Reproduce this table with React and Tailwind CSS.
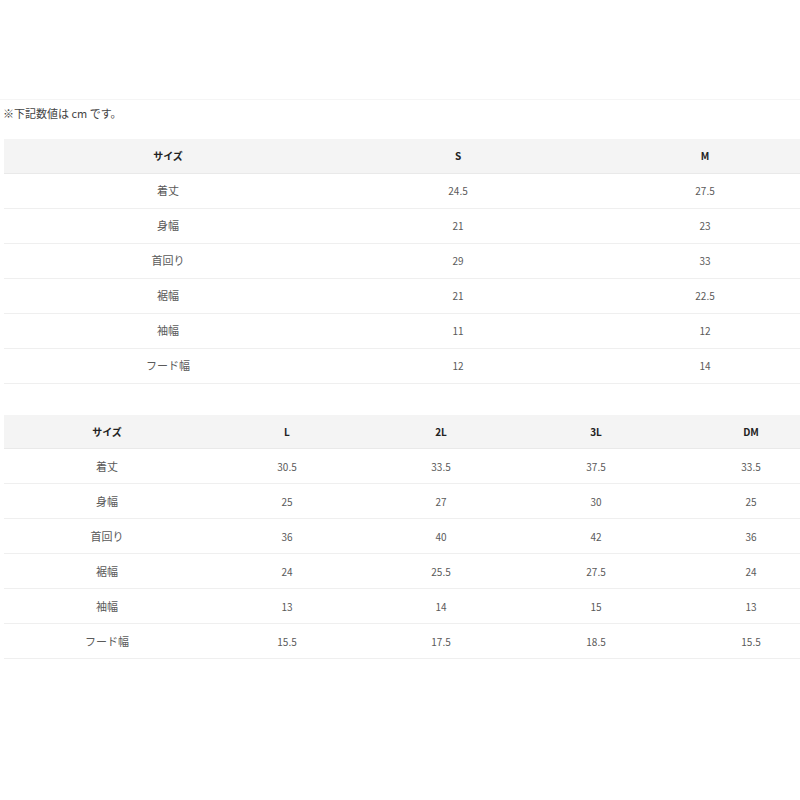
import React from "react";

const table1 = {
    widths: [328, 252, 242],
    head: ["サイズ", "S", "M"],
    rows: [
        ["着丈", "24.5", "27.5"],
        ["身幅", "21", "23"],
        ["首回り", "29", "33"],
        ["裾幅", "21", "22.5"],
        ["袖幅", "11", "12"],
        ["フード幅", "12", "14"],
    ],
};

const table2 = {
    widths: [206, 154, 154, 156, 154],
    head: ["サイズ", "L", "2L", "3L", "DM"],
    rows: [
        ["着丈", "30.5", "33.5", "37.5", "33.5"],
        ["身幅", "25", "27", "30", "25"],
        ["首回り", "36", "40", "42", "36"],
        ["裾幅", "24", "25.5", "27.5", "24"],
        ["袖幅", "13", "14", "15", "13"],
        ["フード幅", "15.5", "17.5", "18.5", "15.5"],
    ],
};

const SizeTable = ({ data }) => {
    const total = data.widths.reduce((a, b) => a + b, 0);
    return (
        <table className="table-fixed border-collapse" style={{ width: total }}>
            <colgroup>
                {data.widths.map((w, i) => (
                    <col key={i} style={{ width: w }} />
                ))}
            </colgroup>
            <thead>
                <tr className="h-[34px] bg-[#f4f4f4] border-b border-[#e9e9e9]">
                    {data.head.map((h, i) => (
                        <th key={i} className="text-center font-bold text-[10px] text-[#222] p-0">
                            {h}
                        </th>
                    ))}
                </tr>
            </thead>
            <tbody>
                {data.rows.map((row, r) => (
                    <tr key={r} className="h-[35px] border-b border-[#efefef]">
                        {row.map((cell, c) => (
                            <td
                                key={c}
                                className={`text-center p-0 text-[#5a5a5a] ${c === 0 ? "text-[11px]" : "text-[10px]"}`}
                            >
                                {cell}
                            </td>
                        ))}
                    </tr>
                ))}
            </tbody>
        </table>
    );
};

const App = () => {
    return (
        <div
            className="w-[800px] h-[800px] bg-white overflow-hidden"
            style={{ fontFamily: '"Noto Sans CJK JP", "DejaVu Sans", sans-serif' }}
        >
            <div className="h-[100px] border-b border-[#f5f5f5]" />
            <p className="pl-[3px] pt-[5px] text-[11px] leading-[16px] text-[#444]">※下記数値は cm です。</p>
            <div className="pl-[4px] mt-[18px]">
                <SizeTable data={table1} />
            </div>
            <div className="pl-[4px] mt-[31px]">
                <SizeTable data={table2} />
            </div>
        </div>
    );
};

export default App;
